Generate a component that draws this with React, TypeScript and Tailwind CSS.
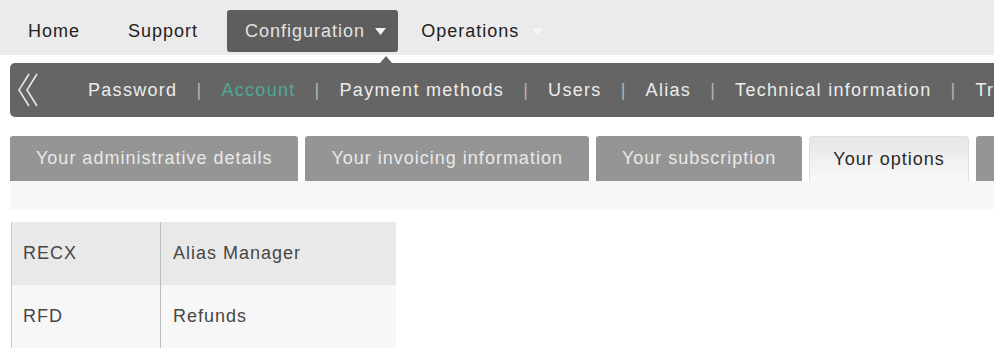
import React from "react";

const subNav = [
  "Password",
  "Account",
  "Payment methods",
  "Users",
  "Alias",
  "Technical information",
  "Transaction feedback",
];

const tabs = [
  "Your administrative details",
  "Your invoicing information",
  "Your subscription",
  "Your options",
];

const options = [
  { code: "RECX", label: "Alias Manager" },
  { code: "RFD", label: "Refunds" },
];

export default function App() {
  return (
    <div className="w-full h-[356px] overflow-hidden bg-white font-['Liberation_Sans',Arial,sans-serif] text-[18px] tracking-[1px]">
      {/* Top menu */}
      <div className="h-[55px] pt-[10px] bg-[#ebebeb]">
        <div className="flex items-center h-[42px] pl-[28px] whitespace-nowrap text-[#222]">
          <span>Home</span>
          <span className="ml-[48px]">Support</span>
          <div className="ml-[29px] h-[42px] flex items-center pl-[18px] pr-[12px] rounded-[3px] bg-[#5e5e5e] text-[#e2e2e2]">
            <span>Configuration</span>
            <svg width="11" height="7" viewBox="0 0 11 7" className="ml-[10px] shrink-0">
              <polygon points="0,0 11,0 5.5,7" fill="#f4f4f4" />
            </svg>
          </div>
          <span className="ml-[23px]">Operations</span>
          <svg width="11" height="7" viewBox="0 0 11 7" className="ml-[13px] shrink-0">
            <polygon points="0,0 11,0 5.5,7" fill="#f7f7f7" />
          </svg>
        </div>
      </div>

      {/* Sub menu */}
      <div className="relative mt-[8px] ml-[10px] h-[54px] rounded-l-[5px] bg-[#656565] flex items-center whitespace-nowrap text-[#ececec] tracking-[1.3px]">
        <svg
          width="12"
          height="7"
          viewBox="0 0 12 7"
          className="absolute -top-[7px] left-[370px]"
        >
          <polygon points="0,7 12,7 6,0" fill="#656565" />
        </svg>
        <svg width="22" height="34" viewBox="0 0 22 34" className="ml-[7px] shrink-0">
          <polyline points="12,1 2,17 12,33" fill="none" stroke="#e6e6e6" strokeWidth="1.6" />
          <polyline points="20,1 10,17 20,33" fill="none" stroke="#e6e6e6" strokeWidth="1.6" />
        </svg>
        <div className="flex items-center shrink-0 ml-[49px]">
          {subNav.map((item, i) => (
            <React.Fragment key={item}>
              {i > 0 && <span className="mx-[19px] text-[#b4b4b4]">|</span>}
              <span className={item === "Account" ? "text-[#4fa898]" : ""}>
                {item}
              </span>
            </React.Fragment>
          ))}
        </div>
      </div>

      {/* Tabs */}
      <div className="mt-[19px] ml-[10px] flex gap-[7px] whitespace-nowrap">
        {tabs.map((t) =>
          t === "Your options" ? (
            <div
              key={t}
              className="h-[45px] px-[23px] shrink-0 flex items-center rounded-t-[4px] border border-b-0 border-[#dddddd] bg-gradient-to-b from-[#e6e6e6] to-[#f9f9f9] text-[#2a2a2a]"
            >
              {t}
            </div>
          ) : (
            <div
              key={t}
              className="h-[45px] px-[26px] shrink-0 flex items-center rounded-t-[3px] bg-[#959595] text-[#e9e9e9]"
            >
              {t}
            </div>
          )
        )}
        <div className="h-[45px] w-[40px] shrink-0 rounded-t-[3px] bg-[#959595]" />
      </div>
      <div className="ml-[10px] h-[29px] bg-[#f7f7f7]" />

      {/* Options table */}
      <div className="mt-[12px] ml-[11px] w-[385px] border-l border-[#c9c9c9] text-[#474747]">
        {options.map((o, i) => (
          <div
            key={o.code}
            className={`flex h-[63px] ${i === 0 ? "bg-[#e9e9e9]" : "bg-[#f7f7f7]"}`}
          >
            <div className="w-[149px] flex items-center pl-[11px] border-r border-[#bdbdbd]">
              {o.code}
            </div>
            <div className="flex-1 flex items-center pl-[12px]">{o.label}</div>
          </div>
        ))}
      </div>
    </div>
  );
}
